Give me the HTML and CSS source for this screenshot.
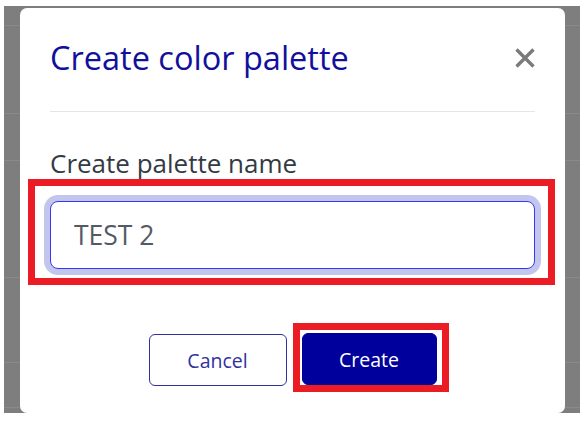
FILE: index.html
```html
<!DOCTYPE html>
<html lang="en">
<head>
<meta charset="utf-8">
<title>Create color palette</title>
<link rel="stylesheet" href="styles.css">
</head>
<body>
<div class="backdrop">
  <div class="rows">
    <div class="row r1"></div>
    <div class="row r2"></div>
    <div class="row r3"></div>
    <div class="row r4"></div>
    <div class="row r5"></div>
    <div class="row r6"></div>
  </div>
  <div class="dialog">
    <div class="dialog-header">
      <h2 class="dialog-title">Create color palette</h2>
      <button class="close" aria-label="Close">
        <svg width="22" height="20" viewBox="0 0 22 20"><path d="M2.5 1.5 L19.5 18.5 M19.5 1.5 L2.5 18.5" stroke="#7b7b7b" stroke-width="3.4" fill="none"/></svg>
      </button>
    </div>
    <div class="dialog-body">
      <label class="field-label" for="name">Create palette name</label>
      <div class="mark mark-input">
        <input id="name" class="text-input" type="text" value="TEST 2">
      </div>
    </div>
    <div class="dialog-footer">
      <button class="btn btn-outline">Cancel</button>
      <span class="mark mark-btn"><button class="btn btn-primary">Create</button></span>
    </div>
  </div>
</div>
</body>
</html>
```
FILE: styles.css
```css
* { box-sizing: border-box; }
html, body { margin: 0; padding: 0; background: #ffffff; }
body { font-family: "Open Sans", "Liberation Sans", sans-serif; }

.backdrop {
  position: relative;
  margin: 6px 0 0 4px;
  width: 576px;
  height: 407px;
  background: #7e7e7e;
  overflow: hidden;
}
.rows { display: flex; flex-direction: column; }
.row { border-bottom: 1px solid #8a8a8a; }
.r1 { height: 20px; }
.r2 { height: 88px; }
.r3 { height: 47px; }
.r4 { height: 117px; }
.r5 { height: 85px; }
.r6 { height: 45px; }

.dialog {
  position: absolute;
  left: 16px;
  top: 2px;
  right: 15px;
  bottom: 0;
  background: #ffffff;
  border-radius: 7px;
  display: flex;
  flex-direction: column;
  padding: 0 30px;
}

.dialog-header {
  display: flex;
  align-items: center;
  justify-content: space-between;
  padding-top: 30px;
  padding-bottom: 33px;
  border-bottom: 1px solid #e2e5ec;
}
.dialog-title {
  margin: 0;
  font-size: 32.5px;
  line-height: 40px;
  font-weight: 400;
  color: #10109c;
}
.close {
  border: 0;
  background: none;
  padding: 0;
  margin: 0 -1px 0 0;
  display: flex;
  width: 22px;
  height: 20px;
}

.dialog-body {
  display: flex;
  flex-direction: column;
  padding-top: 35px;
}
.field-label {
  font-size: 26px;
  line-height: 32px;
  color: #333a44;
}
.mark {
  border: 7px solid #ec1c24;
}
.mark-input {
  margin: 0 -20px 0 -22px;
  padding: 15px 13px 9px 15px;
}
.text-input {
  display: block;
  width: 100%;
  height: 68px;
  border: 1px solid #3838f2;
  border-radius: 8px;
  box-shadow: 0 0 0 6px #c3c6ec;
  padding: 0 0 0 23px;
  font-family: "Open Sans", "Liberation Sans", sans-serif;
  font-size: 26.5px;
  color: #545a64;
  outline: none;
  background: #fff;
}

.dialog-footer {
  display: flex;
  justify-content: center;
  align-items: flex-start;
  gap: 15px;
  margin-top: 49px;
}
.btn {
  height: 52px;
  border-radius: 6px;
  font-family: "Open Sans", "Liberation Sans", sans-serif;
  font-size: 19.5px;
  padding: 0;
  cursor: pointer;
}
.btn-outline {
  width: 138px;
  background: #fff;
  border: 1px solid #2f2f9e;
  color: #3131a0;
}
.btn-primary {
  width: 135px;
  background: #00009c;
  border: 1px solid #00009c;
  color: #ffffff;
  margin-top: -1px;
}
.mark-btn {
  display: inline-flex;
  margin: -11px -12px -7px -9px;
  padding: 4px 5px 0 2px;
}
```
